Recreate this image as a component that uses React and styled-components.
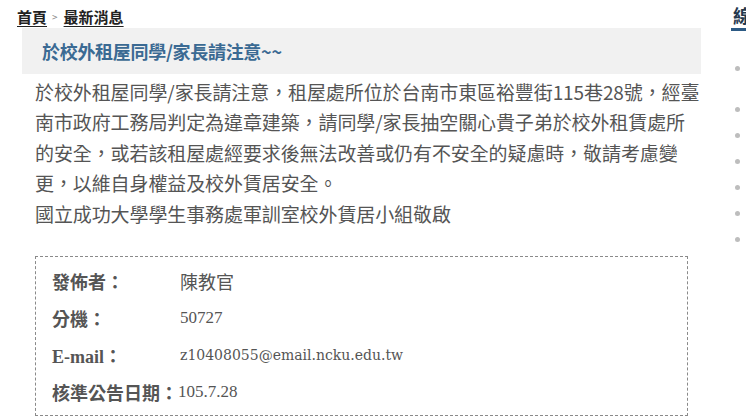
import styled, { createGlobalStyle } from "styled-components";

const GlobalStyle = createGlobalStyle`
    html, body {
        margin: 0;
        padding: 0;
        background: #ffffff;
        overflow: hidden;
    }
    body {
        font-family: "Noto Sans CJK TC", "Noto Sans", sans-serif;
    }
`;

const Page = styled.div`
    width: 746px;
    height: 420px;
    display: flex;
    gap: 30px;
    overflow: hidden;
`;

const Main = styled.div`
    flex: 0 0 684px;
    padding-left: 17px;
    padding-top: 5px;
`;

const Crumbs = styled.div`
    display: flex;
    align-items: center;
    height: 22px;
    font-size: 15px;
    font-weight: 700;
    color: #222;
    & a {
        color: #222;
        text-decoration: underline;
        text-underline-offset: 3px;
    }
`;

const Sep = styled.span`
    font-size: 10px;
    font-weight: 400;
    color: #888;
    margin: 0 6px 0 5px;
`;

const TitleBar = styled.div`
    margin-left: 5px;
    margin-top: 1px;
    height: 46px;
    display: flex;
    align-items: center;
    padding-left: 20px;
    background: #f1f1f1;
`;

const Title = styled.h2`
    margin: 0;
    font-size: 18px;
    font-weight: 600;
    color: #3b6a93;
    letter-spacing: -0.3px;
`;

const Body = styled.p`
    margin: 3px 0 0 18px;
    font-size: 19px;
    line-height: 30.4px;
    color: #555;
    white-space: nowrap;
    letter-spacing: -0.1px;
`;

const InfoBox = styled.div`
    margin: 27px 0 0 18px;
    width: 653px;
    height: 160px;
    box-sizing: border-box;
    border: 1px dashed #8a8a8a;
    padding: 5px 0 0 16px;
    display: grid;
    grid-template-columns: 128px 1fr;
    grid-auto-rows: 37px;
    align-items: center;
`;

const Label = styled.div`
    font-size: 18px;
    font-weight: 700;
    color: #555;
    white-space: nowrap;
    font-family: ${props => (props.latin ? '"Liberation Serif", "Noto Sans CJK TC", serif' : '"Noto Sans CJK TC", sans-serif')};
`;

const Value = styled.div`
    color: #555;
    white-space: nowrap;
    font-size: ${props => (props.mono ? "14px" : props.serif ? "17px" : "18px")};
    font-family: ${props => {
        if (props.mono) return '"DejaVu Serif", serif';
        if (props.serif) return '"Liberation Serif", serif';
        return '"Noto Sans CJK TC", sans-serif';
    }};
    margin-left: ${props => (props.tight ? "-2px" : "0")};
`;

const Side = styled.div`
    flex: 0 0 220px;
    padding-top: 4px;
`;

const SideHead = styled.h3`
    margin: 0 0 0 2px;
    font-size: 18px;
    font-weight: 700;
    color: #24384d;
    line-height: 22px;
    white-space: nowrap;
`;

const SideBar = styled.div`
    height: 3px;
    margin-top: 2px;
    background: #2c5a84;
`;

const SideList = styled.ul`
    list-style: none;
    margin: 24px 0 0 0;
    padding: 0;
`;

const SideItem = styled.li`
    display: flex;
    align-items: center;
    height: 26px;
    margin-bottom: ${props => (props.first ? "15px" : "0")};
    font-size: 15px;
    color: #444;
    white-space: nowrap;
    &::before {
        content: "";
        width: 5px;
        height: 5px;
        border-radius: 50%;
        background: #bdbdbd;
        margin: 0 16px 0 4px;
        flex: 0 0 auto;
    }
`;

const sideItems = ["校外賃居資訊", "租屋安全", "賃居訪視", "法律諮詢", "租屋糾紛", "相關連結", "表單下載"];

const App = () => {
    return (
        <Page>
            <GlobalStyle />
            <Main>
                <Crumbs>
                    <a>首頁</a>
                    <Sep>&gt;</Sep>
                    <a>最新消息</a>
                </Crumbs>
                <TitleBar>
                    <Title>於校外租屋同學/家長請注意~~</Title>
                </TitleBar>
                <Body>
                    於校外租屋同學/家長請注意，租屋處所位於台南市東區裕豐街115巷28號，經臺<br />
                    南市政府工務局判定為違章建築，請同學/家長抽空關心貴子弟於校外租賃處所<br />
                    的安全，或若該租屋處經要求後無法改善或仍有不安全的疑慮時，敬請考慮變<br />
                    更，以維自身權益及校外賃居安全。<br />
                    國立成功大學學生事務處軍訓室校外賃居小組敬啟
                </Body>
                <InfoBox>
                    <Label>發佈者：</Label>
                    <Value>陳教官</Value>
                    <Label>分機：</Label>
                    <Value serif>50727</Value>
                    <Label latin>E-mail：</Label>
                    <Value mono>z10408055@email.ncku.edu.tw</Value>
                    <Label>核準公告日期：</Label>
                    <Value serif tight>105.7.28</Value>
                </InfoBox>
            </Main>
            <Side>
                <SideHead>線上服務</SideHead>
                <SideBar />
                <SideList>
                    {sideItems.map((item, index) => (
                        <SideItem key={item} first={index === 0}>{item}</SideItem>
                    ))}
                </SideList>
            </Side>
        </Page>
    );
};

export default App;
